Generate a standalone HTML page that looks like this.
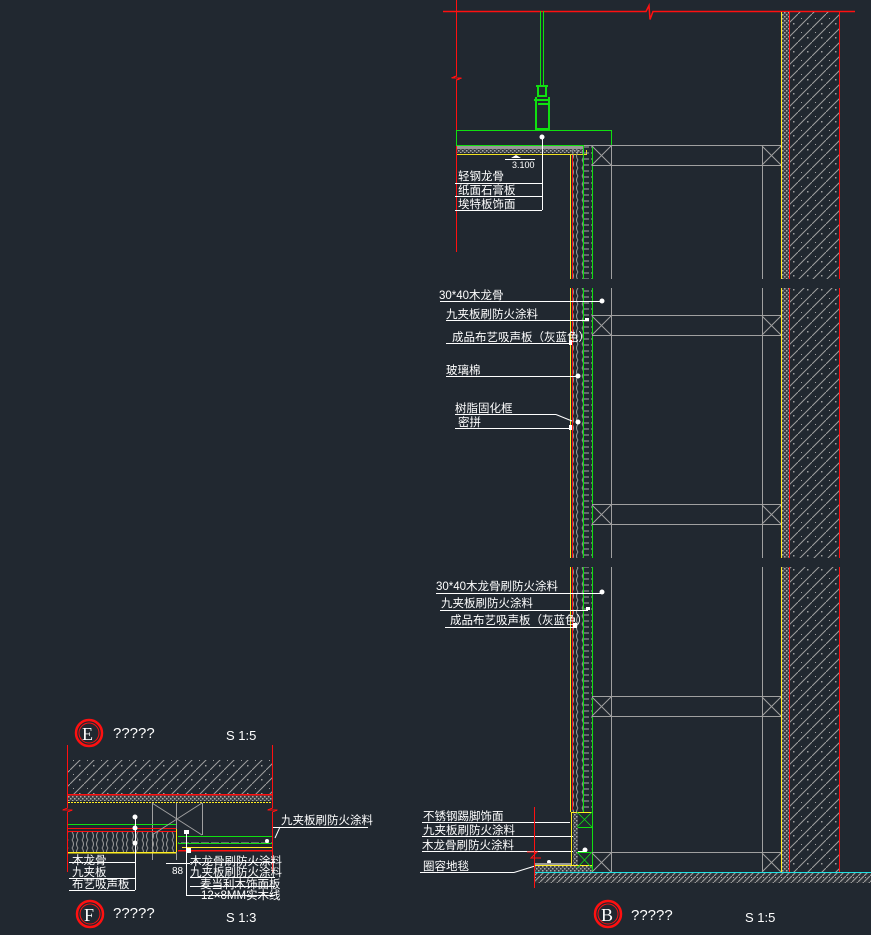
<!DOCTYPE html>
<html><head><meta charset="utf-8"><style>
html,body{margin:0;padding:0;background:#212830;}
svg{display:block}
text{font-family:"Liberation Sans","Noto Sans CJK SC",sans-serif;fill:#fff;font-size:11.5px}
.c{shape-rendering:crispEdges}
</style></head><body>
<svg width="871" height="935" viewBox="0 0 871 935" xmlns="http://www.w3.org/2000/svg">
<defs>
<pattern id="diag" width="14" height="14" patternUnits="userSpaceOnUse">
<path d="M0 14 L14 0" stroke="#a0a0a0" stroke-width="1"/>
<rect x="9" y="9" width="1.5" height="1.5" fill="#a0a0a0"/><rect x="3" y="4" width="1" height="1" fill="#a0a0a0"/>
</pattern>
<pattern id="dots" width="4" height="4" patternUnits="userSpaceOnUse">
<rect width="4" height="4" fill="#3a3f45"/><rect x="0" y="0" width="1.5" height="1.5" fill="#aaa"/><rect x="2" y="2" width="1.5" height="1.5" fill="#aaa"/>
</pattern>
<pattern id="wood" width="10" height="6" patternUnits="userSpaceOnUse">
<path d="M1 3 h8" stroke="#a8a8a8" stroke-width="1"/>
</pattern>
<pattern id="cells" width="10" height="8" patternUnits="userSpaceOnUse">
<path d="M2 0 q3 4 0 8 M8 0 q-3 4 0 8" stroke="#999" fill="none" stroke-width="1"/>
</pattern>
<pattern id="floor" width="6" height="6" patternUnits="userSpaceOnUse">
<rect width="6" height="6" fill="#2e3339"/><path d="M0 6 L6 0" stroke="#999" stroke-width="1.2"/><rect x="1" y="1" width="1" height="1" fill="#aaa"/>
</pattern>
</defs>

<path d="M443 11.5 H646 l3 -6 l1 14 l3 -8 H855" stroke="#ff1010" stroke-width="1.5" fill="none"/>
<g class="c">
<path d="M456.5 0 V76 l-5 2 h10 l-5 2 V252" stroke="#ff1010" stroke-width="1.3" fill="none"/>
<path d="M540.5 11 V85 M543.5 11 V85" stroke="#10e010" stroke-width="1"/>
<path d="M536 86 h12 M538 86 v10 h8 v-10 M534 100 h16 M536 97 v32 h13 v-32 M538 104 h10" stroke="#10e010" stroke-width="2" fill="none"/>
<rect x="456.5" y="130.5" width="155" height="15" fill="none" stroke="#10e010"/>
<rect x="457" y="146" width="127" height="3" fill="#999"/>
<rect x="457" y="149" width="127" height="4" fill="url(#dots)"/>
<path d="M457 154.5 H586.5 V150" stroke="#f0e020" fill="none"/>
</g>
<path d="M511 158 l5 -3 l5 3 z" fill="#fff"/>
<text x="512" y="168" style="font-size:9px">3.100</text>
<g class="c" stroke="#fff"><path d="M505 159.5 H535"/>
<path d="M542.5 139 V210 M455 183.5 H542 M455 196.5 H542 M455 210.5 H542"/></g>
<circle cx="542" cy="137" r="2.5" fill="#fff"/>
<text x="458" y="180">轻钢龙骨</text><text x="458" y="194">纸面石膏板</text><text x="458" y="208">埃特板饰面</text>

<g class="c">
<rect x="572" y="148" width="11" height="131" fill="url(#cells)"/>
<rect x="583" y="146" width="9" height="133" fill="url(#wood)"/>
<rect x="572" y="288" width="11" height="270" fill="url(#cells)"/>
<rect x="583" y="288" width="9" height="270" fill="url(#wood)"/>
<rect x="572" y="567" width="11" height="245" fill="url(#cells)"/>
<rect x="583" y="567" width="9" height="245" fill="url(#wood)"/>
<path d="M570.5 155 V279 M570.5 288 V558 M570.5 567 V812" stroke="#ffee20"/>
<path d="M572.5 155 V279 M572.5 288 V558 M572.5 567 V810" stroke="#ff1010"/>
<path d="M583.5 146 V279 M583.5 288 V558 M583.5 567 V812 M592.5 146 V279 M592.5 288 V558 M592.5 567 V872" stroke="#10e010"/>
</g>

<g stroke="#a0a0a0" fill="none" class="c">
<path d="M611.5 146 V279 M611.5 288 V558 M611.5 567 V872 M762.5 146 V279 M762.5 288 V558 M762.5 567 V872"/>
<path d="M584 145.5 H782 M592 165.5 H782 M592 315.5 H782 M592 335.5 H782 M592 504.5 H782 M592 524.5 H782 M592 696.5 H782 M592 716.5 H782 M592 852.5 H782"/>
</g>
<g stroke="#a0a0a0" fill="none">
<path d="M592 146 L611 165 M611 146 L592 165 M762 146 L781 165 M781 146 L762 165"/>
<path d="M592 316 L611 335 M611 316 L592 335 M762 316 L781 335 M781 316 L762 335"/>
<path d="M592 505 L611 524 M611 505 L592 524 M762 505 L781 524 M781 505 L762 524"/>
<path d="M592 697 L611 716 M611 697 L592 716 M762 697 L781 716 M781 697 L762 716"/>
<path d="M592 853 L611 872 M611 853 L592 872 M762 853 L781 872 M781 853 L762 872"/>
</g>

<g class="c">
<rect x="782" y="12" width="7" height="267" fill="url(#dots)"/><rect x="789" y="12" width="50" height="267" fill="url(#diag)"/>
<rect x="782" y="288" width="7" height="270" fill="url(#dots)"/><rect x="789" y="288" width="50" height="270" fill="url(#diag)"/>
<rect x="782" y="567" width="7" height="305" fill="url(#dots)"/><rect x="789" y="567" width="50" height="305" fill="url(#diag)"/>
<path d="M781.5 12 V279 M781.5 288 V558 M781.5 567 V872" stroke="#ffee20"/>
<path d="M789.5 12 V279 M789.5 288 V558 M789.5 567 V872 M839.5 12 V279 M839.5 288 V558 M839.5 567 V872" stroke="#ff1010"/>
</g>

<g stroke="#fff" class="c">
<path d="M440 301.5 H600 M446 320.5 H588 M446 343.5 H570 M446 376.5 H577 M455 414.5 H556 M455 428.5 H569"/>
<path d="M436 593.5 H602 M440 610.5 H588 M445 627.5 H575"/>
<path d="M422 822.5 H570 M422 836.5 H573 M422 851.5 H585 M420 872.5 H514"/>
</g>
<path d="M556 414.5 L572 421 M514 872.5 L535 866" stroke="#fff"/>
<g fill="#fff">
<circle cx="602" cy="301" r="2.5"/><rect x="585" y="318" width="4" height="3"/><rect x="569" y="340" width="3" height="5"/><circle cx="578" cy="376" r="2.5"/><circle cx="578" cy="422" r="2.5"/><rect x="569" y="425" width="3" height="5"/>
<circle cx="602" cy="592" r="2.5"/><rect x="586" y="607" width="4" height="3"/><rect x="573" y="623" width="4" height="5"/>
<circle cx="585" cy="850" r="2.5"/><circle cx="549" cy="862" r="2"/>
</g>
<text x="439" y="299">30*40木龙骨</text>
<text x="446" y="318">九夹板刷防火涂料</text>
<text x="452" y="341">成品布艺吸声板（灰蓝色）</text>
<text x="446" y="374">玻璃棉</text>
<text x="455" y="412">树脂固化框</text>
<text x="458" y="426">密拼</text>
<text x="436" y="590">30*40木龙骨刷防火涂料</text>
<text x="441" y="607">九夹板刷防火涂料</text>
<text x="450" y="624">成品布艺吸声板（灰蓝色）</text>
<text x="423" y="820">不锈钢踢脚饰面</text>
<text x="423" y="834">九夹板刷防火涂料</text>
<text x="422" y="849">木龙骨刷防火涂料</text>
<text x="423" y="870">圈容地毯</text>

<g class="c">
<path d="M571 812.5 H592 M571.5 812 V865.5 H592" stroke="#ffee20" fill="none"/>
<rect x="573" y="813" width="5" height="52" fill="url(#dots)"/>
<path d="M578 827.5 H592 M577 852.5 H592" stroke="#10e010" fill="none"/>
<path d="M534.5 807 V888 M527 852 h10 l-6 6 h10" stroke="#ff1010" fill="none"/>
<rect x="535" y="863" width="36" height="2" fill="#999"/>
<path d="M535 865.5 H572" stroke="#ffee20"/>
<rect x="535" y="866" width="57" height="6" fill="url(#dots)"/>
<rect x="535" y="873" width="336" height="10" fill="url(#floor)"/>
<path d="M535 872.5 H871" stroke="#20e0e0" stroke-width="1.3"/>
</g>
<path d="M577 812 L592 827 M592 812 L577 827 M577 852 L592 868 M592 852 L577 868" stroke="#10e010" fill="none" stroke-width="0.8"/>

<circle cx="608" cy="914" r="13" fill="none" stroke="#ff1010" stroke-width="2.5"/>
<circle cx="608" cy="914" r="10" fill="none" stroke="#ff1010" stroke-width="1"/>
<text x="601" y="921" style="font-family:'Liberation Serif',serif;font-size:18px">B</text>
<text x="631" y="920" style="font-size:15px">?????</text>
<text x="745" y="922" style="font-size:13px">S 1:5</text>

<circle cx="89" cy="733" r="13" fill="none" stroke="#ff1010" stroke-width="2.5"/>
<circle cx="89" cy="733" r="10" fill="none" stroke="#ff1010" stroke-width="1"/>
<text x="82" y="740" style="font-family:'Liberation Serif',serif;font-size:18px">E</text>
<text x="113" y="738" style="font-size:15px">?????</text>
<text x="226" y="740" style="font-size:13px">S 1:5</text>
<g class="c">
<rect x="68" y="760" width="205" height="34" fill="url(#diag)"/>
<rect x="68" y="795" width="205" height="6" fill="url(#dots)"/>
<path d="M68 794.5 H273" stroke="#ff1010" stroke-width="1.5"/>
<path d="M68 802.5 H273" stroke="#ffee20" stroke-dasharray="2 1"/>
<path d="M67.5 745 V808 l-5 2 h10 l-5 2 V872 M272.5 745 V808 l-5 2 h10 l-5 2 V872" stroke="#ff1010" fill="none"/>
<path d="M152.5 803 V860 M176.5 803 V860 M202.5 803 V835" stroke="#a0a0a0"/>
<rect x="68" y="832" width="108" height="20" fill="url(#cells)"/>
<path d="M68 824.5 H176" stroke="#10e010"/><path d="M68 828.5 H176 M68 831.5 H176" stroke="#ff1010"/>
<path d="M68 852.5 H176" stroke="#ffee20" stroke-width="1.5"/>
<path d="M178 836.5 H272 M178 843.5 H272" stroke="#10e010"/>
<rect x="178" y="838" width="94" height="5" fill="url(#wood)"/>
<path d="M178 850.5 H272" stroke="#ff1010" stroke-width="1.5"/><path d="M182 847.5 H272" stroke="#ffee20"/>
<path d="M176.5 829 V852" stroke="#ffee20"/>
<g stroke="#fff" fill="none">
<path d="M135.5 816 V890 M69 862.5 H135 M69 878.5 H135 M69 890.5 H135"/>
<path d="M186.5 832 V895.5 H275 M190 862.5 H275 M190 877.5 H275 M190 886.5 H275 M166 863.5 H190"/>
<path d="M273 827.5 H368"/>
</g>
</g>
<path d="M152 803 L202 835 M202 803 L152 835" stroke="#a0a0a0"/>
<path d="M280 827 L275 838" stroke="#fff"/>
<g fill="#fff"><circle cx="135" cy="817" r="2.5"/><circle cx="135" cy="828" r="2.5"/><circle cx="135" cy="843" r="2.5"/><rect x="184" y="830" width="5" height="4"/><rect x="186" y="848" width="5" height="5"/><circle cx="267" cy="841" r="2"/></g>
<text x="72" y="864">木龙骨</text><text x="72" y="876">九夹板</text><text x="72" y="888">布艺吸声板</text>
<text x="190" y="865">木龙骨刷防火涂料</text><text x="190" y="876">九夹板刷防火涂料</text>
<text x="200" y="888">麦当利木饰面板</text><text x="201" y="899">12×8MM实木线</text>
<text x="281" y="824">九夹板刷防火涂料</text>
<text x="172" y="874" style="font-size:10px">88</text>

<circle cx="90" cy="914" r="13" fill="none" stroke="#ff1010" stroke-width="2.5"/>
<circle cx="90" cy="914" r="10" fill="none" stroke="#ff1010" stroke-width="1"/>
<text x="84" y="921" style="font-family:'Liberation Serif',serif;font-size:18px">F</text>
<text x="113" y="918" style="font-size:15px">?????</text>
<text x="226" y="922" style="font-size:13px">S 1:3</text>
</svg>
</body></html>
